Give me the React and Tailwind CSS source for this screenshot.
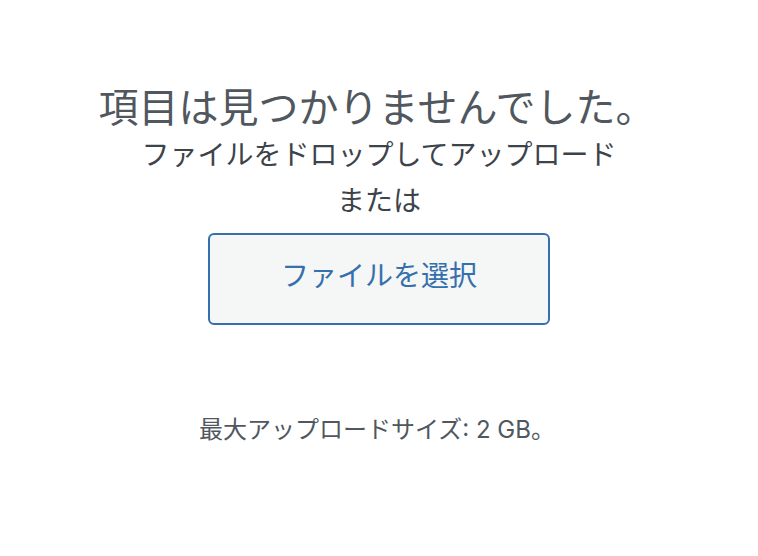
// App.jsx — 空のメディアライブラリ（アップロード案内）
const FONT = "font-['Inter','Noto_Sans_CJK_JP',sans-serif]";

export default function App() {
  return (
    <div className={`min-h-[556px] w-full bg-white ${FONT}`}>
      <div className="flex flex-col items-center pt-[80px] text-center">
        {/* ── 見出し ── */}
        <h2 className="text-[40px] leading-[56px] font-normal text-[#50575e] -ml-[4px]">
          項目は見つかりませんでした。
        </h2>

        {/* ── ドロップ案内 ── */}
        <p className="-mt-[1px] text-[28px] leading-[40px] text-[#3c434a]">
          ファイルをドロップしてアップロード
        </p>
        <p className="mt-[6px] text-[28px] leading-[40px] text-[#3c434a]">
          または
        </p>

        {/* ── ファイル選択ボタン ── */}
        <button
          type="button"
          className="mt-[12px] flex h-[92px] w-[342px] items-center justify-center rounded-[6px]
                     border-2 border-[#3570ad] bg-[#f5f6f6] pb-[6px] text-[28px] leading-[40px]
                     text-[#3570ad] cursor-pointer"
        >
          ファイルを選択
        </button>

        {/* ── 最大サイズ ── */}
        <p className="mt-[88px] text-[24px] leading-[34px] text-[#50575e] -ml-[4px]">
          最大アップロードサイズ: 2 GB。
        </p>
      </div>
    </div>
  );
}
